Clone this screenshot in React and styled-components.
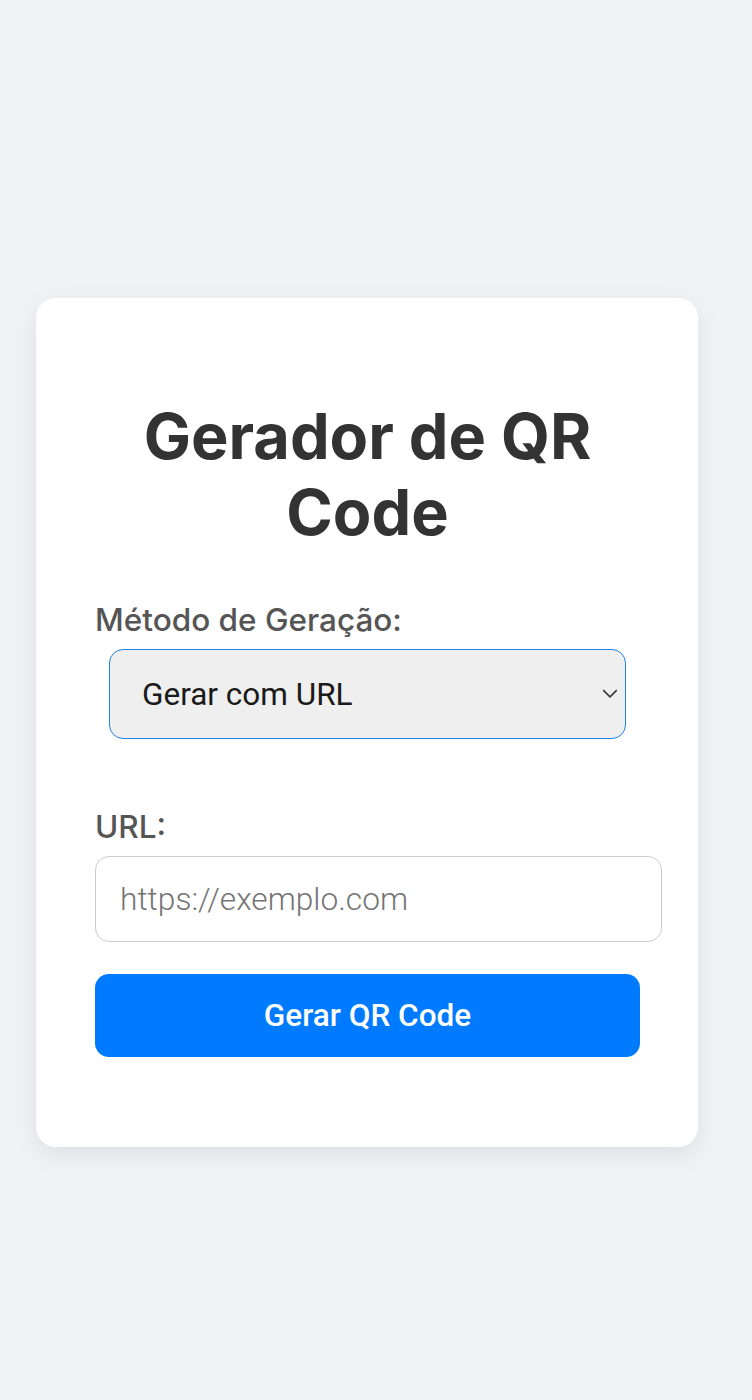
import * as React from "react";
import styled, { createGlobalStyle } from "styled-components";

const Global = createGlobalStyle`
  html, body {
    margin: 0;
    padding: 0;
    background: #f0f2f5;
  }
  * { box-sizing: border-box; }
`;

export default function App() {
  return (
    <>
      <Global />
      <Page>
        <Card>
          <Title>Gerador de QR Code</Title>
          <Label>Método de Geração:</Label>
          <SelectWrap>
            <Select defaultValue="url">
              <option value="url">Gerar com URL</option>
              <option value="text">Gerar com Texto</option>
            </Select>
            <Chevron viewBox="0 0 14 8" aria-hidden="true">
              <path d="M1 1l6 6 6-6" fill="none" stroke="#333" strokeWidth="1.3" />
            </Chevron>
          </SelectWrap>
          <Label $top={70}>URL:</Label>
          <Input placeholder="https://exemplo.com" />
          <Button>Gerar QR Code</Button>
        </Card>
      </Page>
    </>
  );
}

const Page = styled.div`
  min-height: 1400px;
  padding: 298px 54px 0 36px;
`;

const Card = styled.div`
  width: 662px;
  height: 849px;
  background: #fff;
  border-radius: 20px;
  box-shadow: 0 8px 24px rgba(0, 0, 0, 0.08);
  padding: 100px 58px 0 59px;
  display: flex;
  flex-direction: column;
  align-items: flex-start;
`;

const Title = styled.h1`
  width: 545px;
  margin: 0 0 52px;
  text-align: center;
  font-family: Inter, "Liberation Sans", sans-serif;
  font-weight: 700;
  font-size: 63px;
  line-height: 76px;
  color: #333;
`;

const Label = styled.label`
  display: block;
  margin-top: ${(p) => p.$top || 0}px;
  margin-bottom: 11px;
  font-family: Inter, "Liberation Sans", sans-serif;
  font-weight: 500;
  font-size: 31.5px;
  line-height: 36px;
  color: #555;
`;

const SelectWrap = styled.div`
  position: relative;
  margin-left: 14px;
  width: 517px;
  height: 90px;
`;

const Select = styled.select`
  appearance: none;
  width: 100%;
  height: 100%;
  padding: 0 50px 0 32px;
  background: #efefef;
  border: 1.5px solid #2384e6;
  border-radius: 14px;
  font-family: Roboto, "Liberation Sans", sans-serif;
  font-size: 31.5px;
  color: #1a1a1a;
  outline: none;
`;

const Chevron = styled.svg`
  position: absolute;
  right: 8px;
  top: 40px;
  width: 16px;
  height: 9px;
  pointer-events: none;
`;

const Input = styled.input`
  width: 567px;
  height: 86px;
  padding: 0 24px;
  border: 1.5px solid #ccc;
  border-radius: 14px;
  font-family: Roboto, "Liberation Sans", sans-serif;
  font-weight: 300;
  font-size: 31.7px;
  color: #333;
  outline: none;
  &::placeholder {
    color: #757575;
  }
`;

const Button = styled.button`
  margin-top: 32px;
  width: 545px;
  height: 83px;
  border: none;
  border-radius: 14px;
  background: #007bff;
  color: #fff;
  font-family: Roboto, "Liberation Sans", sans-serif;
  font-weight: 500;
  font-size: 31.5px;
  cursor: pointer;
`;
